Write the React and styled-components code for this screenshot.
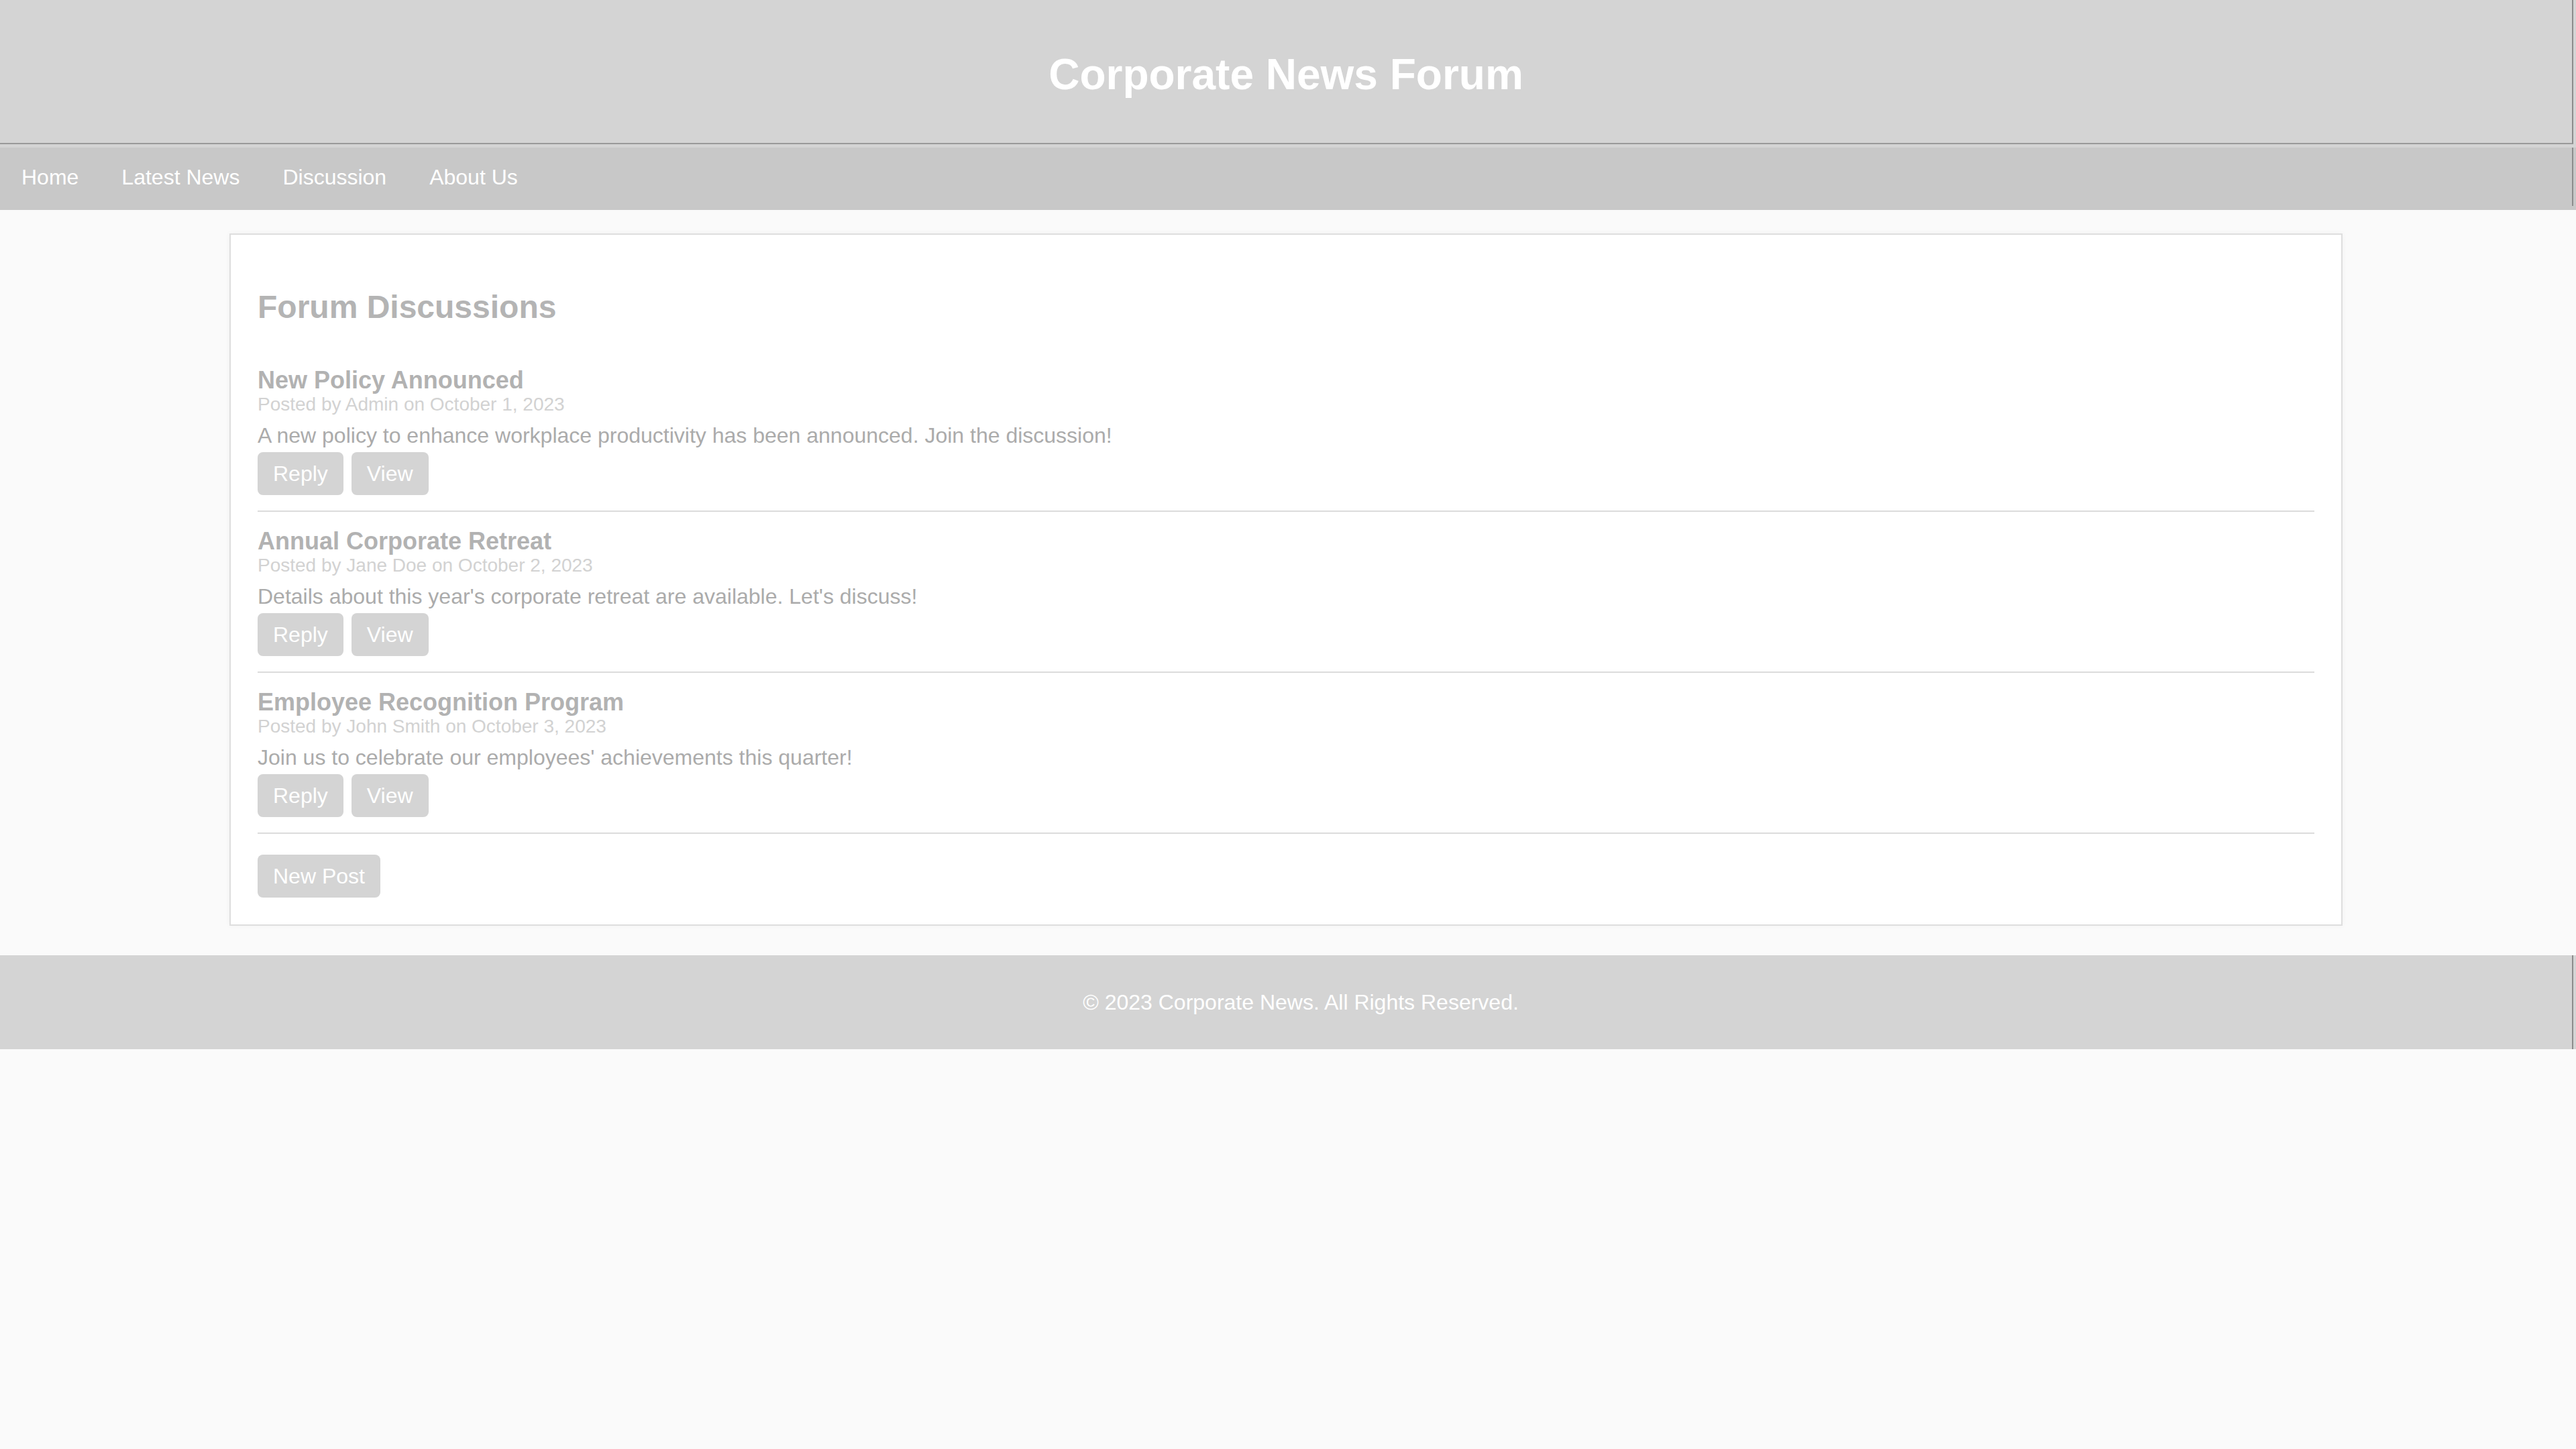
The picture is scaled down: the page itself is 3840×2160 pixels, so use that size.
import React from "react";
import styled, { createGlobalStyle } from "styled-components";

const GlobalStyle = createGlobalStyle`
  html, body {
    margin: 0;
    padding: 0;
    background: #fafafa;
    font-family: "Liberation Sans", Arial, Helvetica, sans-serif;
  }
  * { box-sizing: border-box; }
`;

const Header = styled.header`
  background: #d4d4d4;
  padding-bottom: 5px;
`;

const Masthead = styled.div`
  height: 215px;
  margin-right: 4px;
  padding-top: 8px;
  border-bottom: 2px solid #9a9a9a;
  border-right: 2px solid #8c8c8c;
  display: flex;
  align-items: center;
  justify-content: center;
`;

const Title = styled.h1`
  margin: 0;
  font-size: 64px;
  font-weight: 700;
  color: #ffffff;
  line-height: 74px;
`;

const Nav = styled.nav`
  background: #c8c8c8;
  height: 93px;
`;

const NavList = styled.div`
  height: 87px;
  margin-right: 4px;
  border-right: 2px solid #8c8c8c;
  display: flex;
  align-items: center;
  padding-top: 1px;
`;

const NavLink = styled.a`
  padding: 0 32px;
  font-size: 32px;
  color: #ffffff;
  text-decoration: none;
  line-height: 37px;
`;

const Card = styled.main`
  width: 3150px;
  margin: 35px 0 44px calc((100% - 3156px) / 2);
  background: #ffffff;
  border: 2px solid #dedede;
  box-shadow: 0 0 8px rgba(0, 0, 0, 0.04);
  padding: 40px;
`;

const SectionTitle = styled.h2`
  margin: 40px 0 38px;
  font-size: 48px;
  line-height: 55px;
  font-weight: 700;
  color: #b4b4b4;
`;

const Post = styled.article`
  padding: 23px 0 23px;
  border-bottom: 2px solid #dcdcdc;
`;

const PostTitle = styled.h3`
  margin: 0;
  font-size: 36px;
  line-height: 41px;
  font-weight: 700;
  color: #b2b2b2;
`;

const Meta = styled.div`
  font-size: 28px;
  line-height: 32px;
  color: #d2d2d2;
`;

const Body = styled.p`
  margin: 12px 0 0;
  font-size: 32px;
  line-height: 37px;
  color: #ababab;
`;

const Actions = styled.div`
  display: flex;
  gap: 12px;
  margin-top: 6px;
`;

const Button = styled.button`
  font-family: inherit;
  font-size: 32px;
  line-height: 38px;
  padding: 13px 23px;
  border: none;
  border-radius: 8px;
  background: #d4d4d4;
  color: #ffffff;
  cursor: pointer;
`;

const NewPostRow = styled.div`
  margin-top: 31px;
  display: flex;
`;

const Footer = styled.footer`
  background: #d4d4d4;
  height: 140px;
`;

const FooterInner = styled.div`
  height: 100%;
  margin-right: 4px;
  border-right: 2px solid #8c8c8c;
  padding-left: 44px;
  display: flex;
  align-items: center;
  justify-content: center;
  font-size: 32px;
  color: #ffffff;
`;

const posts = [
  {
    title: "New Policy Announced",
    meta: "Posted by Admin on October 1, 2023",
    body: "A new policy to enhance workplace productivity has been announced. Join the discussion!",
  },
  {
    title: "Annual Corporate Retreat",
    meta: "Posted by Jane Doe on October 2, 2023",
    body: "Details about this year's corporate retreat are available. Let's discuss!",
  },
  {
    title: "Employee Recognition Program",
    meta: "Posted by John Smith on October 3, 2023",
    body: "Join us to celebrate our employees' achievements this quarter!",
  },
];

export default function App() {
  return (
    <>
      <GlobalStyle />
      <Header>
        <Masthead>
          <Title>Corporate News Forum</Title>
        </Masthead>
      </Header>
      <Nav>
        <NavList>
          <NavLink href="#">Home</NavLink>
          <NavLink href="#">Latest News</NavLink>
          <NavLink href="#">Discussion</NavLink>
          <NavLink href="#">About Us</NavLink>
        </NavList>
      </Nav>
      <Card>
        <SectionTitle>Forum Discussions</SectionTitle>
        {posts.map((p) => (
          <Post key={p.title}>
            <PostTitle>{p.title}</PostTitle>
            <Meta>{p.meta}</Meta>
            <Body>{p.body}</Body>
            <Actions>
              <Button>Reply</Button>
              <Button>View</Button>
            </Actions>
          </Post>
        ))}
        <NewPostRow>
          <Button>New Post</Button>
        </NewPostRow>
      </Card>
      <Footer>
        <FooterInner>© 2023 Corporate News. All Rights Reserved.</FooterInner>
      </Footer>
    </>
  );
}
